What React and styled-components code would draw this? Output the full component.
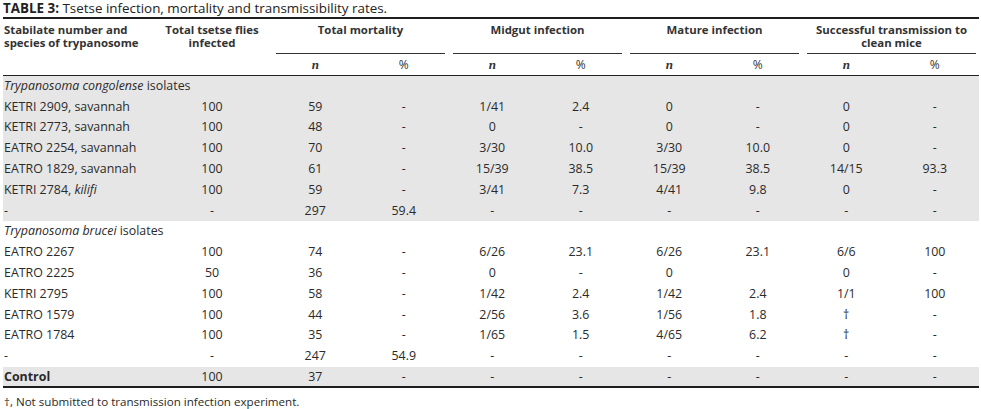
import React from 'react';
import styled, { createGlobalStyle } from 'styled-components';

const Global = createGlobalStyle`
    body {
        margin: 0;
        background: #fff;
        font-family: "Open Sans", Lato, sans-serif;
        color: #2a2a2a;
    }
`;

const Page = styled.div`
    width: 981px;
    padding: 0 2px 0 3px;
    box-sizing: border-box;
`;

const Caption = styled.div`
    font-size: 13.4px;
    line-height: 17px;
    border-bottom: 2px solid #1e1e1e;
    color: #222;
    b { font-weight: 700; }
`;

const Table = styled.table`
    width: 976px;
    table-layout: fixed;
    border-collapse: collapse;
    font-size: 12.4px;
`;

const HeadCell = styled.th`
    padding: ${p => (p.sub ? '0' : '4px 0 0')};
    height: ${p => (p.sub ? '21px' : 'auto')};
    vertical-align: ${p => (p.sub ? 'middle' : 'top')};
    text-align: ${p => (p.left ? 'left' : 'center')};
    padding-left: ${p => (p.left ? '1px' : '0')};
    font-weight: 700;
    font-size: 11.4px;
    line-height: 13px;
    color: #333;
    border-bottom: ${p => (p.sub ? '1.5px solid #222' : 'none')};
`;

const HeadRow = styled.tr`
    th[rowspan] {
        border-bottom: 1.5px solid #222;
    }
`;

const Group = styled.div`
    height: 30px;
    margin: 0 3px 0 5px;
    border-bottom: 1px solid #333;
`;

const SubLabel = styled.span`
    font-family: ${p => (p.italic ? '"Liberation Serif", serif' : 'inherit')};
    font-style: ${p => (p.italic ? 'italic' : 'normal')};
    font-weight: ${p => (p.italic ? 700 : 400)};
    font-size: ${p => (p.italic ? '13px' : '12px')};
`;

const Body = styled.tbody`
    background: ${p => (p.shaded ? '#e6e6e6' : '#fff')};
    border-bottom: ${p => (p.last ? '2.5px solid #1e1e1e' : 'none')};
`;

const Row = styled.tr`
    height: 20.8px;
`;

const Cell = styled.td`
    padding: 0 0 0 ${p => (p.left ? '1px' : '0')};
    text-align: ${p => (p.left ? 'left' : 'center')};
    font-weight: ${p => (p.bold ? 700 : 400)};
    white-space: nowrap;
    line-height: 14px;
    i { font-style: italic; }
`;

const Note = styled.div`
    font-size: 11.6px;
    padding: 6px 0 0 1px;
    color: #2a2a2a;
`;

const groups = [
    'Total mortality',
    'Midgut infection',
    'Mature infection',
    <>Successful transmission to<br />clean mice</>,
];

const congolense = [
    ['KETRI 2909, savannah', '100', '59', '-', '1/41', '2.4', '0', '-', '0', '-'],
    ['KETRI 2773, savannah', '100', '48', '-', '0', '-', '0', '-', '0', '-'],
    ['EATRO 2254, savannah', '100', '70', '-', '3/30', '10.0', '3/30', '10.0', '0', '-'],
    ['EATRO 1829, savannah', '100', '61', '-', '15/39', '38.5', '15/39', '38.5', '14/15', '93.3'],
    [<>KETRI 2784, <i>kilifi</i></>, '100', '59', '-', '3/41', '7.3', '4/41', '9.8', '0', '-'],
    ['-', '-', '297', '59.4', '-', '-', '-', '-', '-', '-'],
];

const brucei = [
    ['EATRO 2267', '100', '74', '-', '6/26', '23.1', '6/26', '23.1', '6/6', '100'],
    ['EATRO 2225', '50', '36', '-', '0', '-', '0', '', '0', '-'],
    ['KETRI 2795', '100', '58', '-', '1/42', '2.4', '1/42', '2.4', '1/1', '100'],
    ['EATRO 1579', '100', '44', '-', '2/56', '3.6', '1/56', '1.8', '†', '-'],
    ['EATRO 1784', '100', '35', '-', '1/65', '1.5', '4/65', '6.2', '†', '-'],
    ['-', '-', '247', '54.9', '-', '-', '-', '-', '-', '-'],
];

const control = ['Control', '100', '37', '-', '-', '-', '-', '-', '-', '-'];

const DataRow = ({ cells, bold }) => (
    <Row>
        {cells.map((c, i) => (
            <Cell key={i} left={i === 0} bold={bold && i === 0}>{c}</Cell>
        ))}
    </Row>
);

const Section = ({ genus, rows, shaded }) => (
    <Body shaded={shaded}>
        <Row>
            <Cell left colSpan={10}><i>Trypanosoma {genus}</i> isolates</Cell>
        </Row>
        {rows.map((r, i) => <DataRow key={i} cells={r} />)}
    </Body>
);

const App = () => (
    <Page>
        <Global />
        <Caption><b>TABLE 3:</b> Tsetse infection, mortality and transmissibility rates.</Caption>
        <Table>
            <colgroup>
                <col style={{ width: 150 }} />
                <col style={{ width: 118 }} />
                {Array.from({ length: 8 }).map((_, i) => <col key={i} style={{ width: 88.5 }} />)}
            </colgroup>
            <thead>
                <HeadRow>
                    <HeadCell left rowSpan={2}>Stabilate number and<br />species of trypanosome</HeadCell>
                    <HeadCell rowSpan={2}>Total tsetse flies<br />infected</HeadCell>
                    {groups.map((g, i) => (
                        <HeadCell key={i} colSpan={2}><Group>{g}</Group></HeadCell>
                    ))}
                </HeadRow>
                <tr>
                    {groups.map((_, i) => (
                        <React.Fragment key={i}>
                            <HeadCell sub><SubLabel italic>n</SubLabel></HeadCell>
                            <HeadCell sub><SubLabel>%</SubLabel></HeadCell>
                        </React.Fragment>
                    ))}
                </tr>
            </thead>
            <Section genus="congolense" rows={congolense} shaded />
            <Section genus="brucei" rows={brucei} />
            <Body shaded last>
                <DataRow cells={control} bold />
            </Body>
        </Table>
        <Note>†, Not submitted to transmission infection experiment.</Note>
    </Page>
);

export default App;
